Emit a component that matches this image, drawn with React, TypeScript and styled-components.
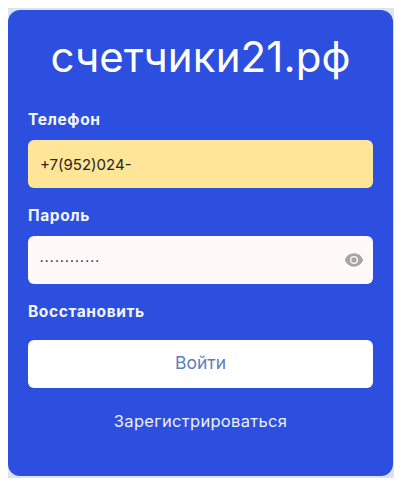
import React from 'react';
import styled, { createGlobalStyle } from 'styled-components';

const GlobalStyle = createGlobalStyle`
	html, body {
		margin: 0;
		padding: 0;
		background: #ffffff;
		font-family: 'Inter', 'Noto Sans', sans-serif;
	}
`;

const Backdrop = styled.div`
	width: 386px;
	margin: 8px 0 0 8px;
	padding: 2px 1px 2px 0;
	box-sizing: border-box;
	background: #dbe3f2;
`;

const Card = styled.form`
	height: 466px;
	box-sizing: border-box;
	padding: 0 20px;
	display: flex;
	flex-direction: column;
	background: #2c4fe0;
	border-radius: 12px;
`;

const Title = styled.h1`
	margin: 23px 0 0;
	height: 48px;
	line-height: 48px;
	font-size: 42px;
	font-weight: 400;
	letter-spacing: 0.1px;
	text-align: center;
	color: #ffffff;
`;

const Label = styled.label<{ $top: number }>`
	display: block;
	margin-top: ${({ $top }) => $top}px;
	height: 20px;
	line-height: 20px;
	font-size: 15.5px;
	font-weight: 700;
	letter-spacing: 0.6px;
	color: #f4f6fd;
`;

const Field = styled.div<{ $bg: string }>`
	position: relative;
	height: 48px;
	margin-top: 10px;
	border-radius: 6px;
	background: ${({ $bg }) => $bg};
`;

const Input = styled.input`
	width: 100%;
	height: 100%;
	box-sizing: border-box;
	padding: 0 12px;
	border: 0;
	outline: 0;
	background: transparent;
	font-family: inherit;
	font-size: 15px;
	color: #2a2320;
`;

const PasswordInput = styled(Input)`
	font-size: 6px;
	letter-spacing: 1.67px;
`;

const EyeButton = styled.span`
	position: absolute;
	right: 9px;
	top: 14px;
	display: flex;
`;

const Submit = styled.button`
	height: 48px;
	margin-top: 18px;
	padding: 0 0 3px;
	border: 0;
	border-radius: 6px;
	background: #ffffff;
	font-family: inherit;
	font-size: 17.5px;
	color: #5b80b8;
`;

const Register = styled.a`
	margin-top: 23px;
	line-height: 20px;
	font-size: 16.5px;
	letter-spacing: 0.3px;
	text-align: center;
	color: #eef1fc;
`;

export default function App() {
	return (
		<>
			<GlobalStyle />
			<Backdrop>
				<Card>
					<Title>счетчики21.рф</Title>
					<Label $top={29}>Телефон</Label>
					<Field $bg="#fee597">
						<Input defaultValue="+7(952)024-" />
					</Field>
					<Label $top={18}>Пароль</Label>
					<Field $bg="#fff9f9">
						<PasswordInput type="password" defaultValue="123456789012" />
						<EyeButton>
							<svg width="20" height="20" viewBox="0 0 24 24" fill="#a6a6a6">
								<path
									fillRule="evenodd"
									d="M12 4C7 4 2.73 7.3 1 12c1.73 4.7 6 8 11 8s9.27-3.3 11-8c-1.73-4.7-6-8-11-8zm0 3.2a4.8 4.8 0 1 1 0 9.6 4.8 4.8 0 0 1 0-9.6z"
								/>
								<circle cx="12" cy="12" r="3.2" />
							</svg>
						</EyeButton>
					</Field>
					<Label $top={18}>Восстановить</Label>
					<Submit type="button">Войти</Submit>
					<Register>Зарегистрироваться</Register>
				</Card>
			</Backdrop>
		</>
	);
}
